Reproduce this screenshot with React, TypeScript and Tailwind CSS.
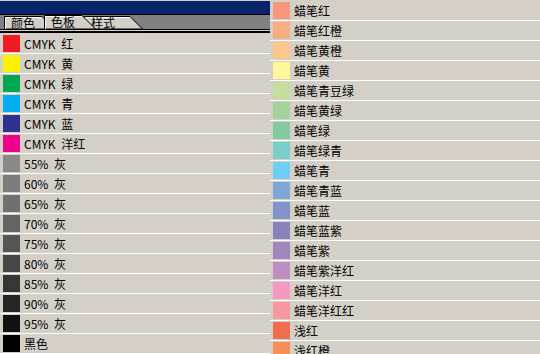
const leftSwatches: [string, string][] = [
  ['#ed1c24', 'CMYK 红'],
  ['#fff200', 'CMYK 黄'],
  ['#00a651', 'CMYK 绿'],
  ['#00aeef', 'CMYK 青'],
  ['#2e3192', 'CMYK 蓝'],
  ['#ec008c', 'CMYK 洋红'],
  ['#898989', '55% 灰'],
  ['#7d7d7d', '60% 灰'],
  ['#707070', '65% 灰'],
  ['#646464', '70% 灰'],
  ['#555555', '75% 灰'],
  ['#464646', '80% 灰'],
  ['#363636', '85% 灰'],
  ['#262626', '90% 灰'],
  ['#111111', '95% 灰'],
  ['#000000', '黑色'],
];

const rightSwatches: [string, string][] = [
  ['#f7977a', '蜡笔红'],
  ['#f9ad81', '蜡笔红橙'],
  ['#fdc68a', '蜡笔黄橙'],
  ['#fff79a', '蜡笔黄'],
  ['#c4df9b', '蜡笔青豆绿'],
  ['#a2d39c', '蜡笔黄绿'],
  ['#82ca9d', '蜡笔绿'],
  ['#7bcdc8', '蜡笔绿青'],
  ['#6ecff6', '蜡笔青'],
  ['#7ea7d8', '蜡笔青蓝'],
  ['#8493ca', '蜡笔蓝'],
  ['#8882be', '蜡笔蓝紫'],
  ['#a187be', '蜡笔紫'],
  ['#bc8dbf', '蜡笔紫洋红'],
  ['#f49ac2', '蜡笔洋红'],
  ['#f6989d', '蜡笔洋红红'],
  ['#f26c4f', '浅红'],
  ['#f68e55', '浅红橙'],
];

function SwatchRow({ color, name }: { color: string; name: string }) {
  return (
    <div className="h-[20px] shrink-0 flex items-center border-b border-white pl-[3px] gap-[4px]">
      <div className="w-[17px] h-[17px] shrink-0" style={{ backgroundColor: color }} />
      <span className="text-[12px] leading-none text-black whitespace-nowrap [word-spacing:3px]">{name}</span>
    </div>
  );
}

function Tab({ label, width, active }: { label: string; width: number; active?: boolean }) {
  const h = active ? 14 : 13;
  return (
    <div className={`relative shrink-0 flex items-center pl-[7px] ${active ? 'z-20 h-[14px]' : 'z-10 h-[13px]'}`} style={{ width }}>
      <svg className="absolute inset-0" width={width} height={h} viewBox={`0 0 ${width} ${h}`}>
        <polygon points={`0.5,${h} 0.5,0.5 ${width - h},0.5 ${width - 0.5},${h}`} fill="#d4d0c8" stroke="#000" strokeWidth={1} />
        <line x1={1.5} y1={h} x2={1.5} y2={1.5} stroke="#fff" strokeWidth={1} />
        <line x1={1.5} y1={1.5} x2={width - h - 0.5} y2={1.5} stroke="#fff" strokeWidth={1} />
      </svg>
      <span className="relative text-[12px] leading-none text-black">{label}</span>
    </div>
  );
}

export default function App() {
  return (
    <div
      className="w-[540px] h-[354px] overflow-hidden flex bg-[#d4d0c8]"
      style={{ fontFamily: '"SimSun", "Noto Sans CJK SC", "Liberation Sans", sans-serif' }}
    >
      {/* Swatches palette */}
      <div className="w-[270px] shrink-0 flex flex-col">
        <div className="h-[1px] bg-[#d4d0c8]" />
        <div className="h-[13px] bg-[#0a246a]" />
        <div className="h-[1px] bg-black" />
        <div className="h-[14px] bg-[#808080] flex items-end pl-[4px]">
          <Tab label="颜色" width={51} />
          <div className="-ml-[11px]">
            <Tab label="色板" width={52} active />
          </div>
          <div className="-ml-[12px]">
            <Tab label="样式" width={59} />
          </div>
        </div>
        <div className="h-[1px] bg-black" />
        <div className="h-[1px] bg-[#d4d0c8]" />
        <div className="h-[2px] bg-black" />
        <div className="h-[1px] bg-[#d4d0c8]" />
        <div className="flex flex-col">
          {leftSwatches.map(([c, n]) => (
            <SwatchRow key={n} color={c} name={n} />
          ))}
        </div>
      </div>

      {/* Continued list */}
      <div className="flex-1 flex flex-col pt-[1px]">
        {rightSwatches.map(([c, n]) => (
          <SwatchRow key={n} color={c} name={n} />
        ))}
      </div>
    </div>
  );
}
